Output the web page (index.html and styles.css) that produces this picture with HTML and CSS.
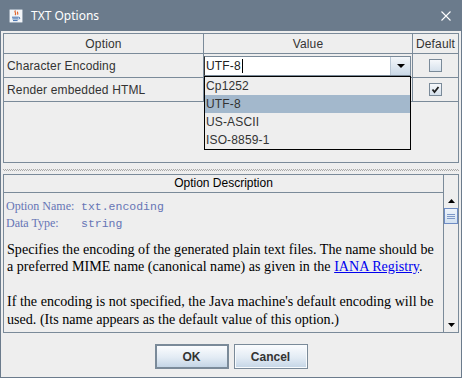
FILE: index.html
```html
<!DOCTYPE html>
<html>
<head>
<meta charset="utf-8">
<title>TXT Options</title>
<link rel="stylesheet" href="styles.css">
</head>
<body>
<div class="window">
  <div class="titlebar">
    <svg class="app-icon" viewBox="0 0 16 16">
      <rect x="1.5" y="1.5" width="13" height="13" rx="1" fill="#f3f5f8" stroke="#a4b0bd"/>
      <path d="M7.5 2.5c-2 1.6 1.6 2.4-.4 4.6M9.8 3.8c-1.1 1 .8 1.6-.3 2.8" stroke="#e0632b" fill="none" stroke-width="1.2"/>
      <path d="M4 9.2h6.5M4.4 10.9h5.8M5 12.6h4.6" stroke="#3f6fae" stroke-width="1"/>
      <path d="M10.6 9.2c1.6 0 1.6 1.9 0 1.9" stroke="#3f6fae" fill="none"/>
    </svg>
    <span class="title">TXT Options</span>
    <svg class="close" viewBox="0 0 10 10">
      <path d="M0.5 0.5L9.5 9.5M9.5 0.5L0.5 9.5" stroke="#ffffff" stroke-width="1.1"/>
    </svg>
  </div>

  <div class="content">
    <div class="table-pane">
      <div class="row header">
        <div class="cell c1">Option</div>
        <div class="cell c2">Value</div>
        <div class="cell c3">Default</div>
      </div>
      <div class="row">
        <div class="cell c1">Character Encoding</div>
        <div class="cell c2">
          <div class="combo">
            <div class="combo-field">UTF-8<span class="caret"></span></div>
            <div class="combo-btn">
              <svg class="tri" viewBox="0 0 8 4"><polygon points="0,0 8,0 4,4" fill="#000"/></svg>
            </div>
          </div>
        </div>
        <div class="cell c3"><span class="check"></span></div>
      </div>
      <div class="row">
        <div class="cell c1">Render embedded HTML</div>
        <div class="cell c2"></div>
        <div class="cell c3">
          <span class="check">
            <svg viewBox="0 0 11 11"><polyline points="2.5,5.5 4.5,8 8.5,3" fill="none" stroke="#1e1e1e" stroke-width="1.8"/></svg>
          </span>
        </div>
      </div>
      <ul class="popup">
        <li>Cp1252</li>
        <li class="selected">UTF-8</li>
        <li>US-ASCII</li>
        <li>ISO-8859-1</li>
      </ul>
    </div>

    <div class="splitter"></div>

    <div class="desc-pane">
      <div class="desc-main">
        <div class="desc-header">Option Description</div>
        <div class="desc-body">
          <div class="meta"><span class="k">Option Name:</span><span class="v">txt.encoding</span></div>
          <div class="meta"><span class="k">Data Type:</span><span class="v">string</span></div>
          <p>Specifies the encoding of the generated plain text files. The name should be a preferred MIME name (canonical name) as given in the <a href="#">IANA Registry</a>.</p>
          <p class="second">If the encoding is not specified, the Java machine's default encoding will be used. (Its name appears as the default value of this option.)</p>
        </div>
      </div>
      <div class="vscroll">
        <div class="corner"></div>
        <div class="arrow">
          <svg class="sarrow" viewBox="0 0 7 4"><polygon points="0,4 3.5,0 7,4" fill="#000"/></svg>
        </div>
        <div class="thumb"><span></span><span></span><span></span></div>
        <div class="track"></div>
        <div class="arrow">
          <svg class="sarrow" viewBox="0 0 7 4"><polygon points="0,0 7,0 3.5,4" fill="#000"/></svg>
        </div>
      </div>
    </div>
  </div>

  <div class="buttons">
    <button class="btn default">OK</button>
    <button class="btn">Cancel</button>
  </div>
</div>
</body>
</html>
```

FILE: styles.css
```css
* { box-sizing: border-box; }
html, body { margin: 0; padding: 0; }
body {
  width: 462px;
  height: 378px;
  overflow: hidden;
  background: #6b7b8c;
  font-family: "Liberation Sans", Arial, sans-serif;
  font-size: 12px;
  color: #333333;
}
.window {
  width: 462px;
  height: 378px;
  display: flex;
  flex-direction: column;
  background: #6b7b8c;
  padding: 0 1px 1px;
}
.titlebar {
  height: 31px;
  flex: none;
  display: flex;
  align-items: center;
  padding: 0 10px 0 7px;
  color: #ffffff;
}
.app-icon { width: 16px; height: 16px; margin-right: 7px; flex: none; }
.title {
  flex: 1;
  font-family: "Segoe UI", "Noto Sans", "Open Sans", sans-serif;
  font-size: 12px;
  padding-bottom: 1px;
}
.close { width: 10px; height: 10px; margin-top: 1px; }

.content {
  flex: none;
  background: #eeeeee;
  padding: 2px 2px 0;
  display: flex;
  flex-direction: column;
}

/* table */
.table-pane {
  position: relative;
  height: 130px;
  border: 1px solid #7a8a99;
}
.row {
  display: grid;
  grid-template-columns: 200px 209px 45px;
  height: 24px;
}
.row.header { height: 20px; }
.cell {
  display: flex;
  align-items: center;
  padding-left: 3px;
  border-right: 1px solid #7a8a99;
  border-bottom: 1px solid #7a8a99;
  white-space: nowrap;
  color: #333333;
  letter-spacing: 0.15px;
}
.cell.c3 { border-right: none; justify-content: center; padding-left: 0; }
.row.header .cell { justify-content: center; padding-left: 0; }
.row .cell.c2 { padding-left: 0; }

.combo {
  display: flex;
  width: 207px;
  height: 20px;
  border: 1px solid #7a8a99;
  border-left-color: #333;
  background: #ffffff;
}
.combo-field {
  flex: 1;
  display: flex;
  align-items: center;
  padding-left: 1px;
  color: #222;
}
.caret { width: 1px; height: 14px; background: #000; margin-left: 1px; }
.combo-btn {
  width: 20px;
  display: flex;
  align-items: center;
  justify-content: center;
  border-left: 1px solid #b8c6d4;
  background: linear-gradient(#f4f7fa, #dbe5ef 60%, #cbd9e7);
}
.tri { width: 8px; height: 4px; display: block; }

.check {
  width: 13px;
  height: 13px;
  border: 1px solid #7a8a99;
  background: linear-gradient(#f6f8fb, #d6e1ec);
  display: flex;
  align-items: center;
  justify-content: center;
}
.check svg { width: 11px; height: 11px; display: block; }

.popup {
  position: absolute;
  left: 200px;
  top: 42px;
  width: 207px;
  height: 74px;
  margin: 0;
  padding: 0;
  list-style: none;
  border: 1px solid #000000;
  background: #eeeeee;
}
.popup li {
  height: 18px;
  line-height: 18px;
  padding-left: 1px;
  color: #333333;
  letter-spacing: 0.15px;
}
.popup li.selected { background: #a3b8cc; }

/* splitter */
.splitter {
  height: 11px;
  flex: none;
  background:
    repeating-linear-gradient(90deg, #a8a8a8 0 1px, transparent 1px 2px) 0 6px / 100% 1px no-repeat,
    repeating-linear-gradient(90deg, transparent 0 1px, #a8a8a8 1px 2px) 0 7px / 100% 1px no-repeat;
}

/* description */
.desc-pane {
  height: 159px;
  border: 1px solid #7a8a99;
  display: flex;
  overflow: hidden;
}
.desc-main {
  flex: 1;
  min-width: 0;
  border-right: 1px solid #7a8a99;
  display: flex;
  flex-direction: column;
  overflow: hidden;
}
.desc-header {
  height: 18px;
  flex: none;
  border-bottom: 1px solid #7a8a99;
  text-align: center;
  line-height: 17px;
  color: #000000;
}
.desc-body {
  padding: 4px 3px 0 3px;
  font-family: "Liberation Serif", "Times New Roman", serif;
  font-size: 14.1px;
  color: #000000;
  overflow: hidden;
}
.meta {
  height: 17px;
  line-height: 17px;
  margin-left: -1px;
  color: #6675b5;
  white-space: nowrap;
}
.meta .k { display: inline-block; width: 75px; font-size: 12px; }
.meta .v { font-family: "Liberation Mono", "Courier New", monospace; font-size: 11.5px; }
.desc-body p {
  margin: 9.5px 0 0;
  line-height: 17.5px;
}
.desc-body p.second { margin-top: 17.5px; }
.desc-body a { color: #0000ee; text-decoration: underline; }

.vscroll {
  width: 14px;
  flex: none;
  display: flex;
  flex-direction: column;
}
.corner { height: 18px; flex: none; }
.arrow {
  height: 15px;
  flex: none;
  display: flex;
  align-items: center;
  justify-content: center;
}
.sarrow { width: 7px; height: 4px; display: block; }
.thumb {
  height: 16px;
  flex: none;
  border: 1px solid #6e8cc4;
  background: linear-gradient(#eef4fb, #d2e1f1);
  display: flex;
  flex-direction: column;
  justify-content: center;
  gap: 1px;
  padding: 0 2px;
}
.thumb span { height: 1px; background: #7d98c8; }
.track { flex: 1; }

/* buttons */
.buttons {
  flex: 1;
  background: #eeeeee;
  display: flex;
  justify-content: center;
  align-items: flex-start;
  gap: 5px;
  padding-top: 11px;
}
.btn {
  width: 74px;
  height: 25px;
  margin: 0;
  padding: 0;
  border: 1px solid #7a8a99;
  box-shadow: inset 0 0 0 1px #f8fbfd;
  background: linear-gradient(#fbfcfe, #e2ebf4 55%, #c4d5e6);
  font-family: "Liberation Sans", Arial, sans-serif;
  font-weight: bold;
  font-size: 12px;
  color: #333333;
}
.btn.default { border: 2px solid #7a8a99; box-shadow: none; }
```
